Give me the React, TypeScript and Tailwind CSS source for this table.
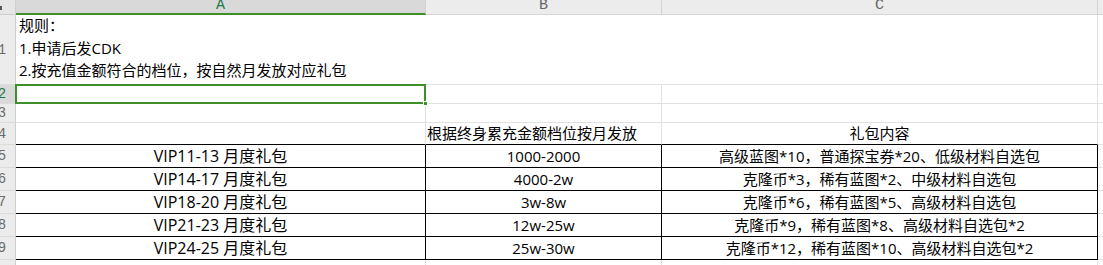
import React from "react";

const FONT = { fontFamily: '"Open Sans", "Noto Sans CJK SC", sans-serif' };
const HFONT = { fontFamily: '"Liberation Mono", "DejaVu Sans Mono", monospace' };

const rows = [
  ["VIP11-13 月度礼包", "1000-2000", "高级蓝图*10，普通探宝券*20、低级材料自选包"],
  ["VIP14-17 月度礼包", "4000-2w", "克隆币*3，稀有蓝图*2、中级材料自选包"],
  ["VIP18-20 月度礼包", "3w-8w", "克隆币*6，稀有蓝图*5、高级材料自选包"],
  ["VIP21-23 月度礼包", "12w-25w", "克隆币*9，稀有蓝图*8、高级材料自选包*2"],
  ["VIP24-25 月度礼包", "25w-30w", "克隆币*12，稀有蓝图*10、高级材料自选包*2"],
];

function RowHead({ n, selected }: { n: number; selected?: boolean }) {
  return (
    <div
      className={`w-[16px] shrink-0 flex items-center overflow-hidden border-r border-b border-r-[#cfcfcf] border-b-[#dcdcdc] ${
        selected ? "bg-[#d9d9d9] text-[#1f7a4a]" : "bg-[#ececec] text-[#6b6b6b]"
      }`}
    >
      <div className="w-[28px] shrink-0 -ml-[12px] text-center text-[14px] leading-none" style={HFONT}>
        {n}
      </div>
    </div>
  );
}

export default function App() {
  return (
    <div className="w-[1103px] h-[265px] overflow-hidden bg-white text-black" style={FONT}>
      {/* column header */}
      <div className="flex h-[15px]">
        <div className="w-[16px] shrink-0 bg-[#e6e6e6] border-r border-b border-[#cfcfcf] relative overflow-hidden">
          <div className="absolute left-0 top-[6px] w-[2px] h-[4px] bg-[#555]" />
        </div>
        <div className="w-[410px] shrink-0 bg-[#d9d9d9] border-r border-r-[#cfcfcf] border-b-2 border-b-[#3e8e2a] flex justify-center overflow-hidden">
          <span className="text-[15px] leading-none -mt-[2px] text-[#1f7a4a]" style={HFONT}>A</span>
        </div>
        <div className="w-[236px] shrink-0 bg-[#ececec] border-r border-b border-[#d4d4d4] flex justify-center overflow-hidden">
          <span className="text-[15px] leading-none -mt-[2px] text-[#666]" style={HFONT}>B</span>
        </div>
        <div className="w-[436px] shrink-0 bg-[#ececec] border-r border-b border-[#d4d4d4] flex justify-center overflow-hidden">
          <span className="text-[15px] leading-none -mt-[2px] text-[#666]" style={HFONT}>C</span>
        </div>
        <div className="flex-1 bg-[#ececec] border-b border-[#d4d4d4]" />
      </div>

      {/* row 1 merged */}
      <div className="flex h-[70px]">
        <RowHead n={1} />
        <div className="w-[1082px] shrink-0 border-r border-b border-[#e1e1e1] px-[3px] text-[15px] leading-[22.5px]">
          <div className="-mt-[1px]">
            <div>规则：</div>
            <div>1.申请后发CDK</div>
            <div>2.按充值金额符合的档位，按自然月发放对应礼包</div>
          </div>
        </div>
        <div className="flex-1 border-b border-[#e1e1e1]" />
      </div>

      {/* row 2 selected */}
      <div className="flex h-[19px]">
        <RowHead n={2} selected />
        <div className="w-[410px] shrink-0 border-r border-b border-[#e1e1e1] relative">
          <div className="absolute -top-[1px] -left-[1px] -right-[1px] -bottom-[1px] border-2 border-[#3e8e2a]" />
          <div className="absolute -right-[3px] -bottom-[3px] w-[5px] h-[5px] bg-[#3e8e2a] border border-white" />
        </div>
        <div className="w-[236px] shrink-0 border-r border-b border-[#e1e1e1]" />
        <div className="w-[436px] shrink-0 border-r border-b border-[#e1e1e1]" />
        <div className="flex-1 border-b border-[#e1e1e1]" />
      </div>

      {/* row 3 */}
      <div className="flex h-[19px]">
        <RowHead n={3} />
        <div className="w-[410px] shrink-0 border-r border-b border-[#e1e1e1]" />
        <div className="w-[236px] shrink-0 border-r border-b border-[#e1e1e1]" />
        <div className="w-[436px] shrink-0 border-r border-b border-[#e1e1e1]" />
        <div className="flex-1 border-b border-[#e1e1e1]" />
      </div>

      {/* row 4 */}
      <div className="flex h-[22px] text-[15px]">
        <RowHead n={4} />
        <div className="w-[410px] shrink-0 border-r border-r-[#e1e1e1] border-b border-b-black" />
        <div className="w-[236px] shrink-0 border-r border-r-[#e1e1e1] border-b border-b-black flex items-center px-[1px] whitespace-nowrap">
          根据终身累充金额档位按月发放
        </div>
        <div className="w-[436px] shrink-0 border-r border-r-[#e1e1e1] border-b border-b-black flex items-center justify-center">
          礼包内容
        </div>
        <div className="flex-1 border-b border-[#e1e1e1]" />
      </div>

      {rows.map((r, i) => (
        <div key={i} className="flex h-[23px]">
          <RowHead n={5 + i} />
          <div className="w-[410px] shrink-0 border-r border-b border-black flex items-center justify-center text-[16px] whitespace-nowrap">
            {r[0]}
          </div>
          <div className="w-[236px] shrink-0 border-r border-b border-black flex items-center justify-center text-[15px] whitespace-nowrap">
            {r[1]}
          </div>
          <div className="w-[436px] shrink-0 border-r border-b border-black flex items-center justify-center text-[15px] whitespace-nowrap">
            {r[2]}
          </div>
          <div className="flex-1 border-b border-[#e1e1e1]" />
        </div>
      ))}

      {/* row 10 */}
      <div className="flex h-[23px]">
        <RowHead n={10} />
        <div className="w-[410px] shrink-0 border-r border-b border-[#e1e1e1]" />
        <div className="w-[236px] shrink-0 border-r border-b border-[#e1e1e1]" />
        <div className="w-[436px] shrink-0 border-r border-b border-[#e1e1e1]" />
        <div className="flex-1 border-b border-[#e1e1e1]" />
      </div>
    </div>
  );
}
